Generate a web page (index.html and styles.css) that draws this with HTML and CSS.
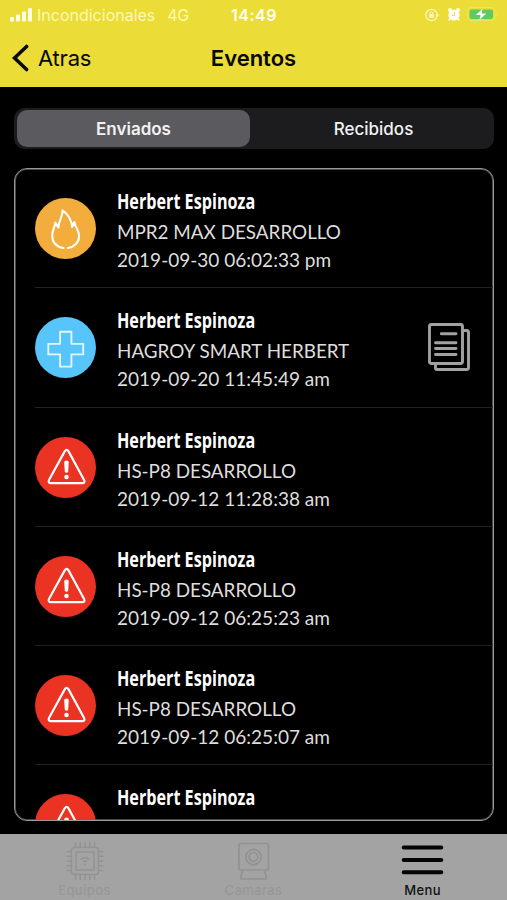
FILE: index.html
```html
<!DOCTYPE html>
<html lang="es">
<head>
    <meta charset="UTF-8">
    <meta name="viewport" content="width=device-width, initial-scale=1.0">
    <title>Eventos</title>
    <link rel="stylesheet" href="styles.css">
</head>
<body>
    <svg class="symbols" width="0" height="0">
        <symbol id="alerta" viewBox="0 0 62 62">
            <path d="M30.200 14.600 L14.200 43.700 Q13 46.900 16.400 46.900 H47.900 Q51.200 46.900 49.900 43.700 L34.100 14.600 Q32.200 11.600 30.200 14.600 Z" fill="none" stroke="#fff" stroke-width="2.200" stroke-linejoin="round"/>
            <path d="M29.700 25.500 Q29.700 23.800 32 23.800 Q34.300 23.800 34.300 25.500 L33.700 35.500 Q32 37 30.300 35.500 Z" fill="#fff"/>
            <circle cx="32" cy="40.600" r="2.300" fill="#fff"/>
        </symbol>
    </svg>

    <header class="header">
        <div class="status">
            <div class="carrier">
                <svg width="23" height="14" viewBox="0 0 23 14" fill="#fffde8">
                    <rect x="0" y="9" width="4" height="4.500" rx="1"/>
                    <rect x="6" y="6.500" width="4" height="7" rx="1"/>
                    <rect x="12" y="3.500" width="4" height="10" rx="1"/>
                    <rect x="18" y="0" width="4" height="13.500" rx="1"/>
                </svg>
                <span class="operator">Incondicionales</span>
                <span class="network">4G</span>
            </div>
            <span class="clock">14:49</span>
            <svg class="indicators" width="76" height="16" viewBox="0 0 76 16">
                <circle cx="9.500" cy="8" r="5.600" fill="none" stroke="#fbf7bd" stroke-width="1.300"/>
                <path d="M13.500 7.500 h4 l-2 2.800 z" fill="#fbf7bd"/>
                <rect x="7.200" y="7" width="4.600" height="3.800" rx=".5" fill="#fbf7bd"/>
                <path d="M8.100 7 V6 a1.400 1.400 0 0 1 2.800 0 V7" fill="none" stroke="#fbf7bd"/>
                <circle cx="32" cy="8" r="5.600" fill="#fffef0"/>
                <circle cx="28" cy="3" r="2" fill="#fffef0"/>
                <circle cx="36" cy="3" r="2" fill="#fffef0"/>
                <path d="M28.300 11.500 l-1.500 2 M35.700 11.500 l1.500 2" stroke="#fffef0" stroke-width="1.500"/>
                <path d="M32.500 5 V8.500 H29.800" fill="none" stroke="#ebdb60" stroke-width="1"/>
                <rect x="45.500" y="0.500" width="27.500" height="13" rx="3.500" fill="none" stroke="#efe565"/>
                <rect x="47.500" y="2.500" width="23.500" height="9.500" rx="2" fill="#5fca62"/>
                <path d="M74.500 5 q1.800 2 0 4 z" fill="#efe565"/>
                <path d="M60.500 1.800 L53.800 8.100 H58.500 L57.500 12.700 L64.300 6.400 H59.600 Z" fill="#fffef0"/>
            </svg>
        </div>
        <div class="navbar">
            <a class="back">
                <svg width="18" height="30" viewBox="0 0 18 30">
                    <path d="M15.600 3.400 L3.500 15 L15.600 26.600" fill="none" stroke="#080804" stroke-width="3.500" stroke-linecap="round"/>
                </svg>
                <span>Atras</span>
            </a>
            <h1>Eventos</h1>
        </div>
    </header>

    <main class="content">
        <div class="tabs">
            <div class="tab active">Enviados</div>
            <div class="tab">Recibidos</div>
        </div>

        <ul class="events">
            <li class="event">
                <div class="icon fire">
                    <svg width="62" height="62" viewBox="0 0 62 62" fill="none" stroke="#fff" stroke-width="2.100" stroke-linecap="round" stroke-linejoin="round">
                        <path d="M29 50.800 C22 49.500 17.500 45 17.500 38 C17.500 33 20 29.500 20.700 25 L23.800 30 C24 22.500 28.300 19.500 28 12.500 C33.500 16.500 37.300 22 37.700 29.500 L40 24.500 C41 30 44.800 33 44.800 38.500 C44.800 45 40 49.800 33.400 50.800"/>
                    </svg>
                </div>
                <div class="info">
                    <h2>Herbert Espinoza</h2>
                    <p class="device">MPR2 MAX DESARROLLO</p>
                    <p class="date">2019-09-30 06:02:33 pm</p>
                </div>
            </li>
            <li class="event">
                <div class="icon medical">
                    <svg width="62" height="62" viewBox="0 0 62 62" fill="none" stroke="#e3f6ff" stroke-width="1.900" stroke-linejoin="round">
                        <path d="M25.500 15 H37 V27.300 H49 V38 H37 V50.500 H25.500 V38 H13.500 V27.300 H25.500 Z"/>
                    </svg>
                </div>
                <div class="info">
                    <h2>Herbert Espinoza</h2>
                    <p class="device">HAGROY SMART HERBERT</p>
                    <p class="date">2019-09-20 11:45:49 am</p>
                </div>
                <svg class="document" width="44" height="50" viewBox="0 0 44 50" fill="none" stroke="#a1a1a1" stroke-width="2.900" stroke-linecap="round">
                    <rect x="2.500" y="2.500" width="33" height="39" rx="2"/>
                    <path d="M36 8.500 H39.500 Q41.500 8.500 41.500 10.500 V45.500 Q41.500 47.500 39.500 47.500 H10 Q8.500 47.500 8.500 46 V43"/>
                    <path d="M14.300 11.700 H29 M8.500 20.700 H29 M8.500 26.500 H29 M8.500 32.500 H29"/>
                </svg>
            </li>
            <li class="event">
                <div class="icon alert"><svg width="62" height="62"><use href="#alerta"/></svg></div>
                <div class="info">
                    <h2>Herbert Espinoza</h2>
                    <p class="device">HS-P8 DESARROLLO</p>
                    <p class="date">2019-09-12 11:28:38 am</p>
                </div>
            </li>
            <li class="event">
                <div class="icon alert"><svg width="62" height="62"><use href="#alerta"/></svg></div>
                <div class="info">
                    <h2>Herbert Espinoza</h2>
                    <p class="device">HS-P8 DESARROLLO</p>
                    <p class="date">2019-09-12 06:25:23 am</p>
                </div>
            </li>
            <li class="event">
                <div class="icon alert"><svg width="62" height="62"><use href="#alerta"/></svg></div>
                <div class="info">
                    <h2>Herbert Espinoza</h2>
                    <p class="device">HS-P8 DESARROLLO</p>
                    <p class="date">2019-09-12 06:25:07 am</p>
                </div>
            </li>
            <li class="event">
                <div class="icon alert"><svg width="62" height="62"><use href="#alerta"/></svg></div>
                <div class="info">
                    <h2>Herbert Espinoza</h2>
                </div>
            </li>
        </ul>
    </main>

    <nav class="tabbar">
        <a class="item">
            <svg width="40" height="40" viewBox="0 0 40 40" fill="none" stroke="#939393" stroke-width="1.500">
                <rect x="6.500" y="6.500" width="27" height="27" rx="3"/>
                <rect x="11" y="11" width="18" height="18"/>
                <path d="M10.500 1 V6 M15.300 1 V6 M20 1 V6 M24.800 1 V6 M29.500 1 V6 M10.500 34 V39 M15.300 34 V39 M20 34 V39 M24.800 34 V39 M29.500 34 V39 M1.500 10.500 H6.500 M1.500 15.300 H6.500 M1.500 20 H6.500 M1.500 24.800 H6.500 M1.500 29.500 H6.500 M33.500 10.500 H38.500 M33.500 15.300 H38.500 M33.500 20 H38.500 M33.500 24.800 H38.500 M33.500 29.500 H38.500"/>
                <path d="M16 18.500 Q20 15 24 18.500 M18 21 Q20 19 22 21 M20 22.500 V24"/>
            </svg>
            <span>Equipos</span>
        </a>
        <a class="item">
            <svg width="40" height="40" viewBox="0 0 40 40" fill="none" stroke="#929292" stroke-width="1.700">
                <rect x="5" y="2.500" width="29.500" height="26.500" rx="2"/>
                <circle cx="19.500" cy="16" r="7.700"/>
                <circle cx="19.500" cy="16" r="4.300"/>
                <path d="M8.500 29.500 L6.500 37 Q6.500 38 7.500 38 H31.500 Q32.500 38 32.500 37 L30.500 29.500"/>
            </svg>
            <span>Camaras</span>
        </a>
        <a class="item selected">
            <svg width="44" height="40" viewBox="0 0 44 40" stroke="#050505" stroke-width="4" stroke-linecap="round">
                <path d="M2.700 6.500 H40.300 M2.700 19 H40.300 M2.700 31.200 H40.300"/>
            </svg>
            <span>Menu</span>
        </a>
    </nav>
</body>
</html>
```
FILE: styles.css
```css
* {
    box-sizing: border-box;
}
body {
    margin: 0;
    height: 900px;
    display: flex;
    flex-direction: column;
    overflow: hidden;
    background-color: #000;
    color: #fff;
    font-family: Inter, "Liberation Sans", sans-serif;
}
h1, h2, p, ul {
    margin: 0;
    padding: 0;
}
.symbols {
    display: none;
}
.header {
    height: 87px;
    background-color: #ebdc38;
}
.status {
    display: grid;
    grid-template-columns: 1fr auto 1fr;
    align-items: center;
    height: 29px;
    padding: 0 9px 0 10px;
    color: #fdf9b4;
}
.carrier {
    display: flex;
    align-items: center;
    font-size: 16px;
}
.operator {
    margin-left: 4px;
}
.network {
    margin-left: 12px;
    letter-spacing: -0.4px;
}
.clock {
    font-size: 16px;
    font-weight: 600;
    letter-spacing: 0.5px;
    color: #fffef0;
}
.indicators {
    justify-self: end;
}
.navbar {
    display: grid;
    grid-template-columns: 1fr auto 1fr;
    align-items: center;
    height: 58px;
    padding: 0 11px;
    color: #080804;
}
.back {
    display: flex;
    align-items: center;
    gap: 9px;
    font-size: 22px;
    letter-spacing: -0.2px;
}
.navbar h1 {
    font-size: 22px;
    font-weight: 600;
}
.content {
    flex: 1;
    min-height: 0;
    padding: 21px 13px 13px 14px;
    display: flex;
    flex-direction: column;
}
.tabs {
    display: flex;
    height: 41px;
    padding: 2px 3px;
    margin-bottom: 19px;
    border-radius: 11px;
    background-color: #1c1c1e;
}
.tab {
    flex: 1;
    display: flex;
    align-items: center;
    justify-content: center;
    padding-left: 6px;
    border-radius: 10px;
    font-size: 17px;
    font-weight: 500;
    color: #f2f2f2;
}
.tab.active {
    flex: 0 0 233px;
    padding-left: 0;
    font-weight: 600;
    background-color: #5b5b5f;
}
.events {
    flex: 1;
    min-height: 0;
    overflow: hidden;
    list-style: none;
    border: 1px solid #9a9a9a;
    box-shadow: inset 0 0 0 1px #484848;
    border-radius: 13px;
}
.event {
    display: flex;
    height: 119.25px;
    margin-left: 20px;
    padding-top: 19px;
    border-bottom: 1px solid #202020;
}
.icon {
    width: 61px;
    height: 61px;
    margin-top: 10px;
    border-radius: 50%;
    flex-shrink: 0;
}
.icon svg {
    display: block;
    width: 61px;
    height: 61px;
}
.fire {
    background-color: #f2ad3d;
}
.medical {
    background-color: #57c4fa;
}
.alert {
    background-color: #eb3323;
}
.info {
    margin-left: 21px;
    width: 300px;
    white-space: nowrap;
}
.info h2 {
    height: 27px;
    line-height: 26px;
    font-family: "Open Sans", sans-serif;
    font-size: 21px;
    font-weight: 700;
    transform: scaleX(0.77);
    transform-origin: left;
}
.info p {
    height: 28px;
    line-height: 32px;
    font-family: Lato, sans-serif;
    font-size: 20px;
    color: #dedede;
    transform-origin: left;
}
.info .device {
    transform: scaleX(0.942);
}
.info .date {
    transform: scaleX(0.951);
}
.document {
    margin: 15px 0 0 10px;
    flex-shrink: 0;
}
.tabbar {
    height: 66px;
    display: flex;
    background-color: #a3a3a3;
}
.item {
    flex: 1;
    display: flex;
    flex-direction: column;
    align-items: center;
    padding-top: 7px;
    font-size: 13px;
    font-weight: 500;
    color: #979797;
}
.item span {
    line-height: 18px;
    letter-spacing: 0.4px;
}
.item.selected {
    color: #111;
}
```
